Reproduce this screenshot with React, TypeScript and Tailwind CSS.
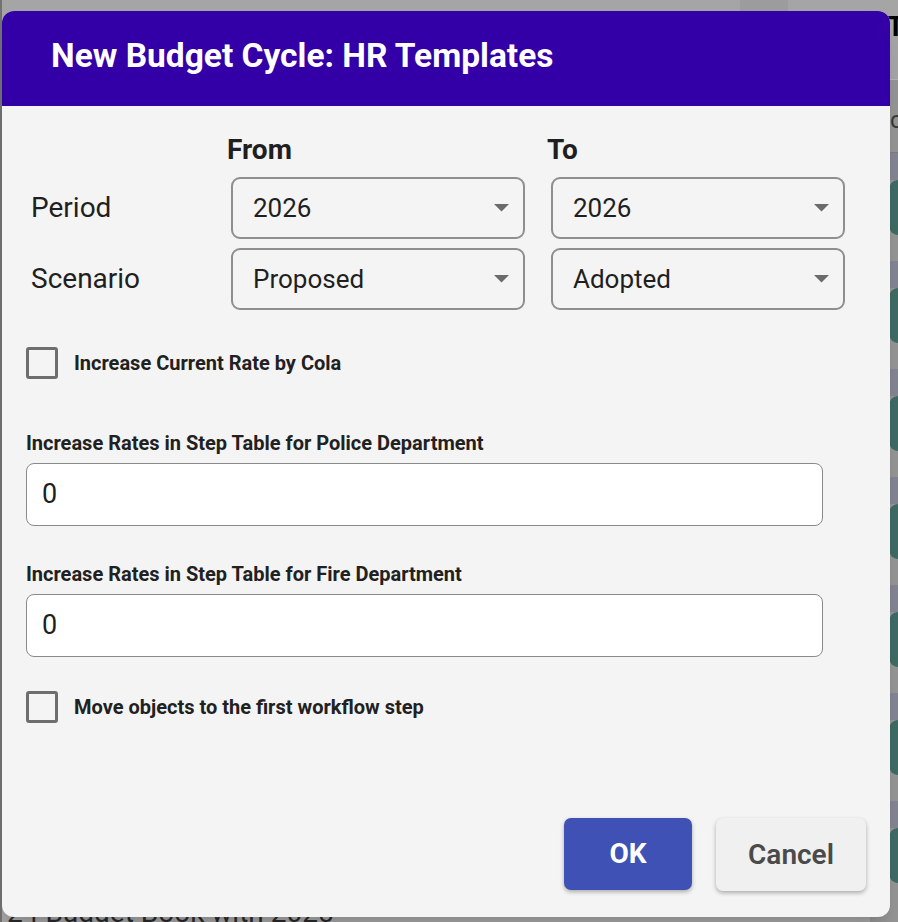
import React from "react";

const Arrow = () => (
  <svg width="15" height="8" viewBox="0 0 15 8" className="shrink-0">
    <polygon points="0,0 15,0 7.5,7.5" fill="#6b6b6b" />
  </svg>
);

const Select = ({ value }: { value: string }) => (
  <div className="h-[62px] rounded-[9px] border-2 border-[#8e8e8e] flex items-center justify-between pl-[20px] pr-[14px]">
    <span className="text-[26px] text-[#1f1f1f]">{value}</span>
    <Arrow />
  </div>
);

const Checkbox = ({ label }: { label: string }) => (
  <div className="flex items-center gap-[16px]">
    <div className="w-[32px] h-[32px] rounded-[3px] border-[3px] border-[#6e6e6e] shrink-0" />
    <span className="text-[20px] font-bold text-[#212121]">{label}</span>
  </div>
);

const NumberField = ({ label, mt }: { label: string; mt: string }) => (
  <div className={mt}>
    <div className="text-[20px] leading-[24px] font-bold text-[#212121]">
      {label}
    </div>
    <div className="mt-[8px] w-[797px] h-[63px] bg-white rounded-[8px] border border-[#8a8a8a] flex items-center pl-[15px]">
      <span className="text-[27px] text-[#1f1f1f]">0</span>
    </div>
  </div>
);

const rows = [0, 1, 2, 3, 4, 5, 6];

export default function App() {
  return (
    <div className="relative h-[922px] w-full overflow-hidden bg-[#a5a5a5] font-['Roboto',sans-serif]">
      {/* dimmed page behind the dialog */}
      <div className="flex h-full">
        <div className="flex-1 flex flex-col border-l-2 border-[#727272]">
          <div className="h-[80px] flex">
            <div className="ml-[738px] w-[48px] h-full bg-[#9c9c9c]" />
          </div>
          <div className="flex-1" />
          <div className="pl-[5px] h-[26px] text-[28px] leading-[34px] text-[#2a2a2a] whitespace-nowrap">
            24 Budget Book with 2025
          </div>
        </div>
        <div className="w-[28px] flex flex-col bg-[#959595] overflow-hidden">
          <div className="h-[80px] bg-[#a5a5a5] pl-[17px] pt-[6px] text-[28px] font-bold text-black whitespace-nowrap border-b border-[#b5b5b5]">
            Ta
          </div>
          <div className="h-[73px] pl-[20px] pt-[22px] text-[24px] text-[#3a3a3a] whitespace-nowrap border-b border-[#7c7c7c]">
            c
          </div>
          {rows.map((r) => (
            <div key={r} className="h-[108px] shrink-0 flex flex-col">
              <div className="h-[27px] bg-[#848592]" />
              <div className="h-[55px] ml-[19px] rounded-l-[14px] bg-[#3e6b64]" />
            </div>
          ))}
        </div>
      </div>

      {/* dialog */}
      <div className="absolute left-[2px] top-[11px] w-[888px] h-[906px] rounded-[12px] overflow-hidden bg-[#f4f4f4] flex flex-col shadow-xl">
        <div className="h-[95px] shrink-0 bg-[#3300a8] flex items-center pl-[49px]">
          <h2 className="text-[33.5px] font-bold text-white -mt-[4px]">
            New Budget Cycle: HR Templates
          </h2>
        </div>

        <div className="flex-1 flex flex-col px-[24px] pt-[28px] pb-[26px]">
          <div className="grid grid-cols-[174px_294px_294px] gap-x-[26px] gap-y-[9px] pl-[5px] items-center">
            <div />
            <div className="text-[28px] leading-[32px] font-bold text-[#1f1f1f] -ml-[4px] mb-[2px]">
              From
            </div>
            <div className="text-[28px] leading-[32px] font-bold text-[#1f1f1f] -ml-[4px] mb-[2px]">
              To
            </div>

            <div className="text-[28px] text-[#1f1f1f]">Period</div>
            <Select value="2026" />
            <Select value="2026" />

            <div className="text-[28px] text-[#1f1f1f]">Scenario</div>
            <Select value="Proposed" />
            <Select value="Adopted" />
          </div>

          <div className="mt-[37px]">
            <Checkbox label="Increase Current Rate by Cola" />
          </div>

          <NumberField
            label="Increase Rates in Step Table for Police Department"
            mt="mt-[52px]"
          />
          <NumberField
            label="Increase Rates in Step Table for Fire Department"
            mt="mt-[36px]"
          />

          <div className="mt-[34px]">
            <Checkbox label="Move objects to the first workflow step" />
          </div>

          <div className="mt-auto flex justify-end gap-[24px]">
            <button className="w-[128px] h-[72px] rounded-[7px] bg-[#3f51b5] text-white text-[28px] font-bold shadow-[0_2px_4px_rgba(0,0,0,0.3)]">
              OK
            </button>
            <button className="w-[150px] h-[73px] rounded-[7px] bg-[#f0f0f0] text-[#4a4a4a] text-[28px] font-semibold shadow-[0_2px_4px_rgba(0,0,0,0.3)]">
              Cancel
            </button>
          </div>
        </div>
      </div>
    </div>
  );
}
